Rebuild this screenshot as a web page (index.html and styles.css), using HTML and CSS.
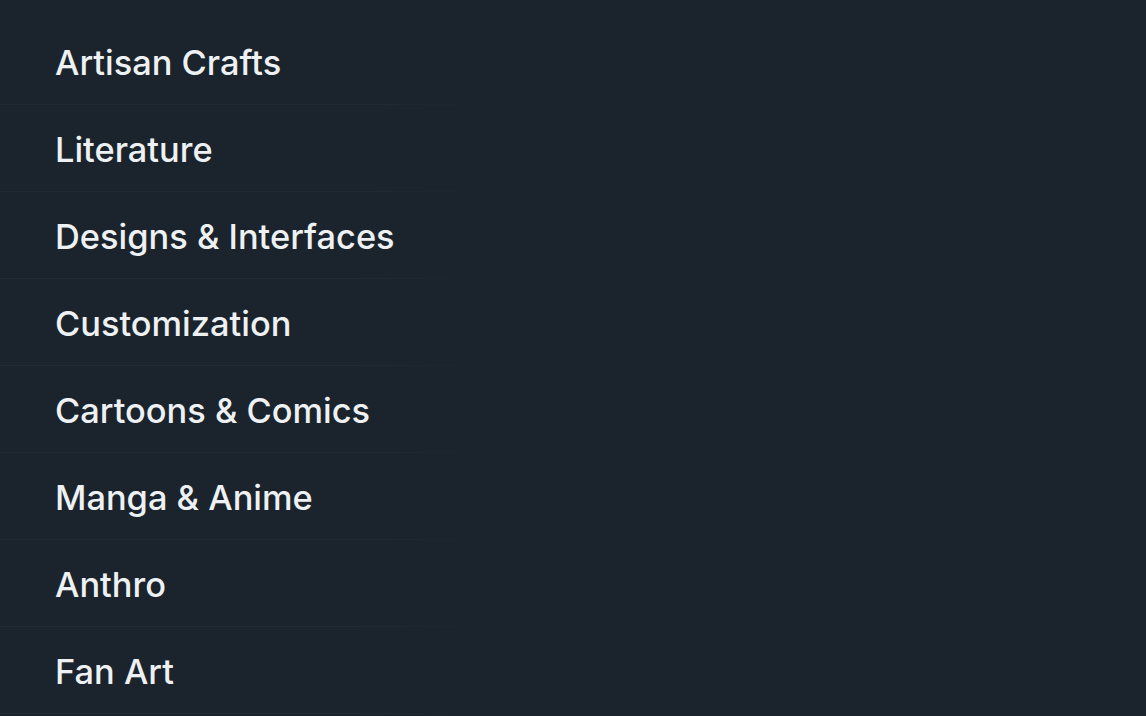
FILE: index.html
```html
<!DOCTYPE html>
<html lang="en">
<head>
<meta charset="utf-8">
<title>Categories</title>
<link rel="stylesheet" href="styles.css">
</head>
<body>
<nav class="menu">
  <ul class="list">
    <li class="item">Artisan Crafts</li>
    <li class="item">Literature</li>
    <li class="item">Designs &amp; Interfaces</li>
    <li class="item">Customization</li>
    <li class="item">Cartoons &amp; Comics</li>
    <li class="item">Manga &amp; Anime</li>
    <li class="item">Anthro</li>
    <li class="item">Fan Art</li>
  </ul>
</nav>
</body>
</html>
```

FILE: styles.css
```css
html, body {
  margin: 0;
  padding: 0;
  background: #1b242c;
  height: 100%;
  overflow: hidden;
}
.menu {
  padding-top: 18px;
}
.list {
  list-style: none;
  margin: 0;
  padding: 0;
}
.item {
  height: 86px;
  display: flex;
  align-items: center;
  padding-left: 55px;
  padding-top: 3px;
  box-sizing: border-box;
  height: 87px;
  font-family: Inter, "Noto Sans", sans-serif;
  font-size: 34.4px;
  font-weight: 500;
  color: #eef1f3;
  border-bottom: 1px solid;
  border-image: linear-gradient(90deg, #222b34 0%, #222b34 30%, rgba(34,43,52,0) 42%) 1;
}
```
